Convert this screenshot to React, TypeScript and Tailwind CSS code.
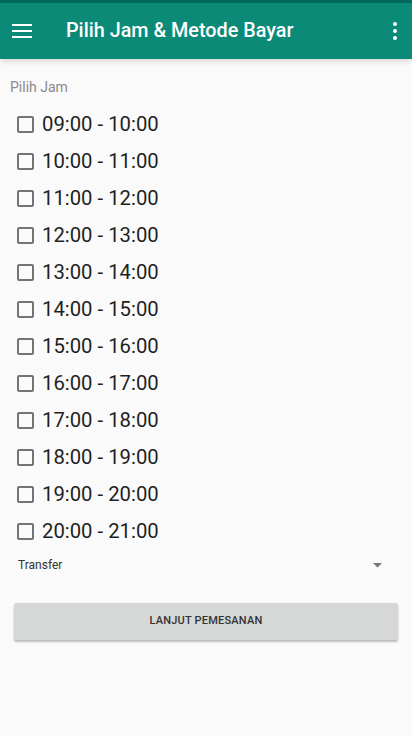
import React from 'react';

const slots = [
  '09:00 - 10:00',
  '10:00 - 11:00',
  '11:00 - 12:00',
  '12:00 - 13:00',
  '13:00 - 14:00',
  '14:00 - 15:00',
  '15:00 - 16:00',
  '16:00 - 17:00',
  '17:00 - 18:00',
  '18:00 - 19:00',
  '19:00 - 20:00',
  '20:00 - 21:00',
];

const App: React.FC = () => {
  return (
    <div className="w-[412px] h-[736px] bg-[#fafafa] flex flex-col overflow-hidden" style={{ fontFamily: 'Roboto, "Noto Sans", sans-serif' }}>
      <div className="h-[3px] bg-[#00695c]"></div>
      <div className="h-[56px] bg-[#0b8a77] flex items-center shadow-md relative z-10">
        <svg width="20" height="14" viewBox="0 0 20 14" className="ml-[12px]">
          <rect x="0" y="0" width="20" height="2" fill="#fff" />
          <rect x="0" y="6" width="20" height="2" fill="#fff" />
          <rect x="0" y="12" width="20" height="2" fill="#fff" />
        </svg>
        <span className="ml-[34px] text-white text-[19.8px] font-medium">Pilih Jam &amp; Metode Bayar</span>
        <div className="ml-auto mr-[15px] flex flex-col gap-[3px]">
          <span className="w-[4px] h-[4px] rounded-full bg-white"></span>
          <span className="w-[4px] h-[4px] rounded-full bg-white"></span>
          <span className="w-[4px] h-[4px] rounded-full bg-white"></span>
        </div>
      </div>

      <div className="px-[10px] pt-[18px]">
        <div className="text-[14px] text-[#8a8a8a] leading-[20px]">Pilih Jam</div>
        <div className="mt-[9px] flex flex-col">
          {slots.map((s) => (
            <label key={s} className="h-[37px] flex items-center pl-[7px]">
              <span className="w-[17px] h-[17px] border-2 border-[#737373] rounded-[2px]"></span>
              <span className="ml-[8px] text-[20.3px] text-[#1f1f1f]">{s}</span>
            </label>
          ))}
        </div>
        <div className="h-[30px] flex items-center pl-[8px] pr-[20px]">
          <span className="text-[12px] text-[#333]">Transfer</span>
          <svg width="9" height="5" viewBox="0 0 9 5" className="ml-auto">
            <path d="M0 0 L9 0 L4.5 4.5 Z" fill="#777" />
          </svg>
        </div>
        <div className="px-[4px] mt-[23px]">
          <button className="w-full h-[37px] bg-[#d6d7d7] rounded-[2px] shadow-[0_2px_2px_rgba(0,0,0,0.25)] text-[11px] font-medium text-[#333] tracking-[0.2px]">
            LANJUT PEMESANAN
          </button>
        </div>
      </div>
    </div>
  );
};

export default App;
